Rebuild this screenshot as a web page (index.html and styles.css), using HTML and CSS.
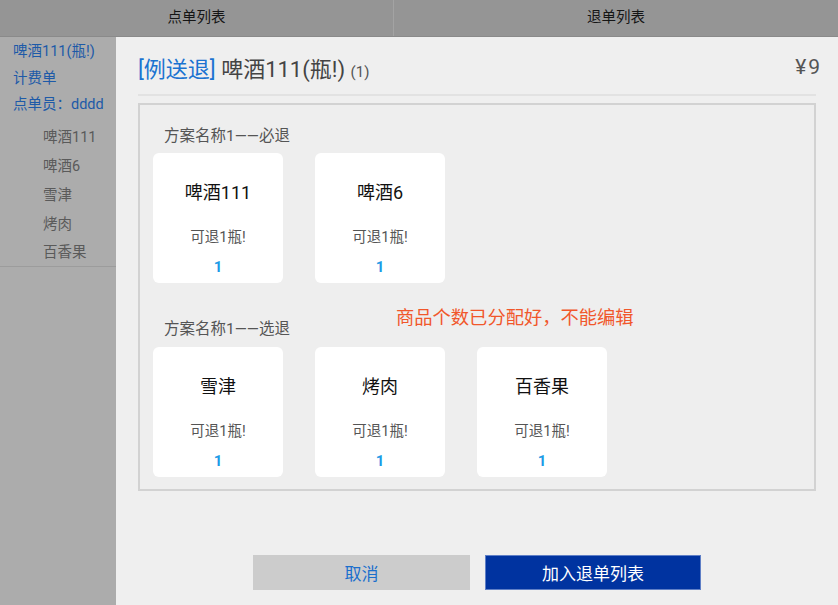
FILE: index.html
```html
<!DOCTYPE html>
<html lang="zh">
<head>
<meta charset="utf-8">
<link rel="stylesheet" href="styles.css">
</head>
<body>
<div class="app">
  <div class="tabs">
    <div class="tab tab-left">点单列表</div>
    <div class="tab">退单列表</div>
  </div>
  <div class="main">
    <aside class="sidebar">
      <div class="side-head">
        <div class="side-title">啤酒111(瓶!)</div>
        <div class="side-title">计费单</div>
        <div class="side-title">点单员：dddd</div>
      </div>
      <ul class="side-list">
        <li>啤酒111</li>
        <li>啤酒6</li>
        <li>雪津</li>
        <li>烤肉</li>
        <li>百香果</li>
      </ul>
    </aside>
    <section class="content">
      <div class="title-row">
        <div class="title"><span class="tag">[例送退]</span> <span class="name">啤酒111(瓶!)</span> <span class="count">(1)</span></div>
        <div class="price">¥9</div>
      </div>
      <div class="box">
        <div class="group">
          <div class="group-title">方案名称1——必退</div>
          <div class="cards">
            <div class="card"><div class="c-name">啤酒111</div><div class="c-sub">可退1瓶!</div><div class="c-num">1</div></div>
            <div class="card"><div class="c-name">啤酒6</div><div class="c-sub">可退1瓶!</div><div class="c-num">1</div></div>
          </div>
        </div>
        <div class="group group-2">
          <div class="group-title">方案名称1——选退</div>
          <div class="cards">
            <div class="card"><div class="c-name">雪津</div><div class="c-sub">可退1瓶!</div><div class="c-num">1</div></div>
            <div class="card"><div class="c-name">烤肉</div><div class="c-sub">可退1瓶!</div><div class="c-num">1</div></div>
            <div class="card"><div class="c-name">百香果</div><div class="c-sub">可退1瓶!</div><div class="c-num">1</div></div>
          </div>
        </div>
        <div class="notice">商品个数已分配好，不能编辑</div>
      </div>
      <div class="actions">
        <button class="btn btn-cancel">取消</button>
        <button class="btn btn-ok">加入退单列表</button>
      </div>
    </section>
  </div>
</div>
</body>
</html>
```

FILE: styles.css
```css
* { box-sizing: border-box; }
html, body { margin: 0; padding: 0; }
body {
  width: 838px;
  height: 605px;
  overflow: hidden;
  font-family: Roboto, "Noto Sans CJK SC", "Noto Sans", sans-serif;
  background: #efefef;
}
.app { display: flex; flex-direction: column; height: 605px; }
.tabs {
  display: flex;
  height: 37px;
  background: #959595;
  border-bottom: 1px solid #8a8a8a;
}
.tab {
  flex: 1;
  display: flex;
  align-items: center;
  justify-content: center;
  font-size: 14.5px;
  color: #151515;
  padding-bottom: 6px;
}
.tab-left { flex: 0 0 394px; border-right: 1px solid #a3a3a3; }
.main { flex: 1; display: flex; min-height: 0; }
.sidebar {
  width: 116px;
  background: #acacac;
  flex-shrink: 0;
}
.side-head { padding: 2px 0 0 13px; }
.side-title {
  font-size: 14.5px;
  line-height: 26.5px;
  color: #1d5aa8;
  white-space: nowrap;
}
.side-list {
  list-style: none;
  margin: 4px 0 0;
  padding: 0;
  border-bottom: 1px solid #9c9c9c;
}
.side-list li {
  font-size: 14.5px;
  line-height: 29px;
  color: #5a5a5a;
  padding-left: 43px;
}
.side-list li:last-child { line-height: 27px; }
.content {
  flex: 1;
  background: #efefef;
  padding: 0 22px;
  display: flex;
  flex-direction: column;
}
.title-row {
  display: flex;
  justify-content: space-between;
  align-items: center;
  height: 59px;
  padding-top: 2px;
  border-bottom: 2px solid #e2e2e2;
}
.title { font-size: 22px; color: #444; white-space: nowrap; }
.tag { color: #1b73d1; }
.count { font-size: 15px; color: #555; }
.price { font-size: 21px; color: #555; margin-right: -6px; letter-spacing: 2px; }
.box {
  position: relative;
  margin-top: 7px;
  height: 388px;
  border: 2px solid #d2d2d2;
  background: #eeeeee;
  padding: 20px 13px 0;
}
.group-title {
  font-size: 15.5px;
  line-height: 22px;
  color: #555;
  padding-left: 11px;
}
.cards { display: flex; gap: 32px; margin-top: 6px; }
.group-2 { margin-top: 35px; }
.group-2 .cards { margin-top: 7px; }
.card {
  width: 130px;
  height: 130px;
  background: #fff;
  border-radius: 6px;
  display: flex;
  flex-direction: column;
  align-items: center;
  padding-top: 28px;
}
.c-name { font-size: 18px; line-height: 24px; color: #111; }
.c-sub { font-size: 14.5px; line-height: 20px; color: #555; margin-top: 23px; }
.c-num { font-size: 15px; line-height: 20px; color: #1d9be6; font-weight: bold; margin-top: 9px; }
.notice {
  position: absolute;
  left: 256px;
  top: 201px;
  font-size: 18.3px;
  line-height: 24px;
  color: #f1572b;
  white-space: nowrap;
}
.actions {
  display: flex;
  justify-content: center;
  gap: 15px;
  margin-top: 64px;
}
.btn {
  width: 217px;
  height: 35px;
  border: none;
  font-family: inherit;
  font-size: 17px;
  padding: 0;
}
.btn-cancel { background: #cccccc; color: #1a6fcc; }
.btn-ok { background: #0033a0; color: #fff; border: 1px solid #5f7fc6; width: 216px; }
```
